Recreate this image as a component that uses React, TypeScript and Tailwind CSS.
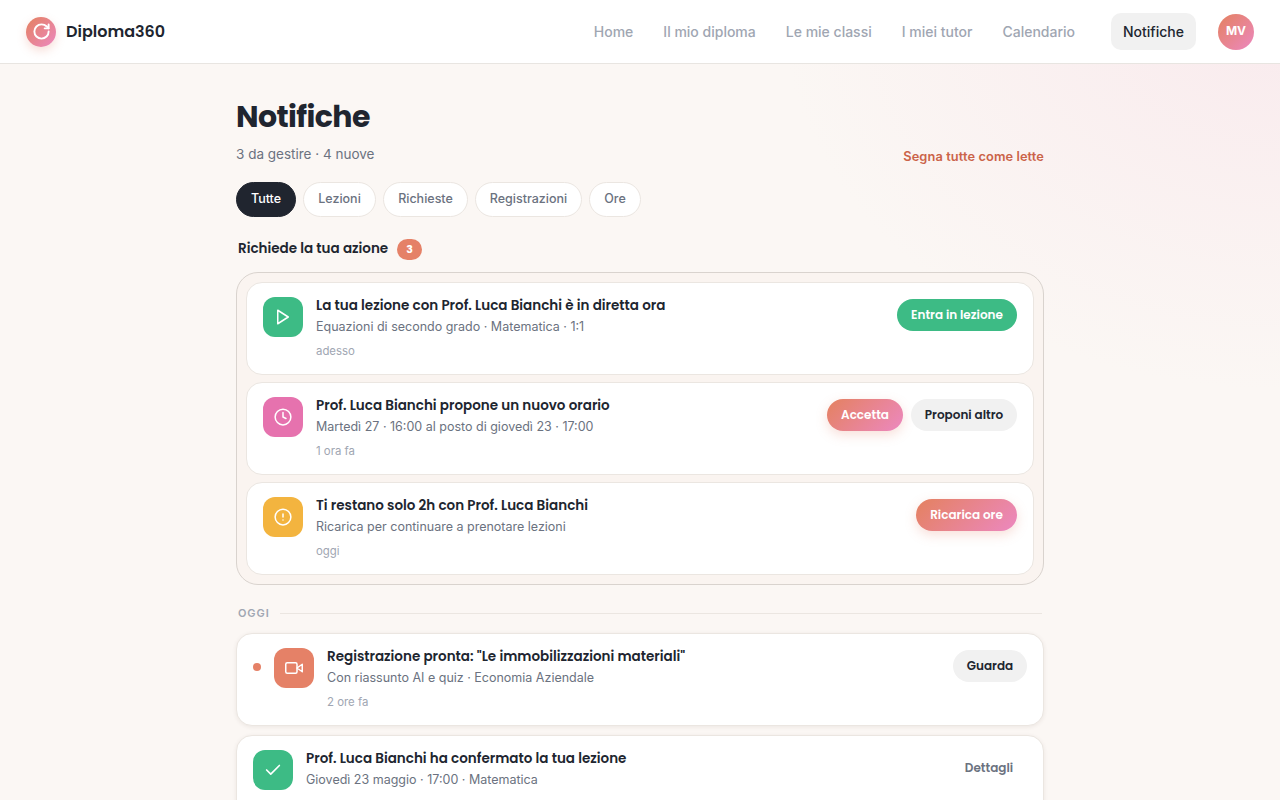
import type { ReactNode } from "react";

type Tone = "green" | "primary" | "soft" | "ghost";

interface Action {
  label: string;
  tone: Tone;
  className: string;
}

interface Item {
  title: string;
  text: string;
  time?: string;
  iconBg: string;
  icon: ReactNode;
  unread?: boolean;
  actions: Action[];
}

const tones: Record<Tone, string> = {
  green: "bg-[#3dbb85] text-white",
  primary:
    "bg-[linear-gradient(135deg,#e4815f,#ec88c0)] text-white shadow-[0_4px_12px_rgba(229,128,102,0.25)]",
  soft: "bg-[#f1f1f1] text-[#20252f]",
  ghost: "text-[#6b7280]",
};

const heading = "font-[Poppins,Inter,sans-serif]";

const Glyph = ({ children }: { children: ReactNode }) => (
  <svg
    width={18}
    height={18}
    viewBox="0 0 24 24"
    fill="none"
    stroke="currentColor"
    strokeWidth="2"
    strokeLinecap="round"
    strokeLinejoin="round"
    className="overflow-visible"
  >
    {children}
  </svg>
);

const navItems = ["Home", "Il mio diploma", "Le mie classi", "I miei tutor", "Calendario"];

const filters = [
  { label: "Tutte", className: "w-[60px] bg-[#20252f] border-[#20252f] text-white" },
  { label: "Lezioni", className: "w-[73px] bg-white border-[#ebe6e1] text-[#6b7280]" },
  { label: "Richieste", className: "w-[85px] bg-white border-[#ebe6e1] text-[#6b7280]" },
  { label: "Registrazioni", className: "w-[107px] bg-white border-[#ebe6e1] text-[#6b7280]" },
  { label: "Ore", className: "w-[52px] bg-white border-[#ebe6e1] text-[#6b7280]" },
];

const pending: Item[] = [
  {
    title: "La tua lezione con Prof. Luca Bianchi è in diretta ora",
    text: "Equazioni di secondo grado · Matematica · 1:1",
    time: "adesso",
    iconBg: "bg-[#3dbb85]",
    icon: <path d="M5 3l14 9-14 9z" />,
    actions: [{ label: "Entra in lezione", tone: "green", className: "w-[120px]" }],
  },
  {
    title: "Prof. Luca Bianchi propone un nuovo orario",
    text: "Martedì 27 · 16:00 al posto di giovedì 23 · 17:00",
    time: "1 ora fa",
    iconBg: "bg-[#e672ae]",
    icon: (
      <>
        <circle cx="12" cy="12" r="10.5" />
        <path d="M12 6v6l4 2" />
      </>
    ),
    actions: [
      { label: "Accetta", tone: "primary", className: "w-[76px]" },
      { label: "Proponi altro", tone: "soft", className: "w-[106px]" },
    ],
  },
  {
    title: "Ti restano solo 2h con Prof. Luca Bianchi",
    text: "Ricarica per continuare a prenotare lezioni",
    time: "oggi",
    iconBg: "bg-[#f3b43f]",
    icon: (
      <>
        <circle cx="12" cy="12" r="10.5" />
        <path d="M12 8v4M12 16h.01" />
      </>
    ),
    actions: [{ label: "Ricarica ore", tone: "primary", className: "w-[101px]" }],
  },
];

const today: Item[] = [
  {
    title: 'Registrazione pronta: "Le immobilizzazioni materiali"',
    text: "Con riassunto AI e quiz · Economia Aziendale",
    time: "2 ore fa",
    iconBg: "bg-[#e58167]",
    unread: true,
    icon: (
      <>
        <rect x="1" y="5" width="15" height="14" rx="2" />
        <path d="M23 7l-7 5 7 5z" />
      </>
    ),
    actions: [{ label: "Guarda", tone: "soft", className: "w-[74px]" }],
  },
  {
    title: "Prof. Luca Bianchi ha confermato la tua lezione",
    text: "Giovedì 23 maggio · 17:00 · Matematica",
    iconBg: "bg-[#3dbb85]",
    icon: <path d="M20.5 6L9 17.5l-5.5-5.5" strokeWidth="2.2" />,
    actions: [{ label: "Dettagli", tone: "ghost", className: "w-[76px]" }],
  },
];

const NotificationCard = ({ item, raised }: { item: Item; raised?: boolean }) => (
  <article
    className={`flex h-[93px] shrink-0 items-start rounded-[16px] border border-[#ebe6e1] bg-white px-4 pt-3.5 ${
      raised ? "shadow-[0_1px_4px_rgba(60,40,20,0.08)]" : ""
    }`}
  >
    {item.unread && <span className="mt-[15px] mr-[13px] size-2 shrink-0 rounded-full bg-[#e58167]" />}
    <div className={`flex size-10 shrink-0 items-center justify-center rounded-[12px] text-white ${item.iconBg}`}>
      <Glyph>{item.icon}</Glyph>
    </div>
    <div className="ml-[13px] min-w-0 flex-1">
      <h3 className={`${heading} text-[13.5px] leading-[17px] font-semibold whitespace-nowrap text-[#20252f]`}>
        {item.title}
      </h3>
      <p className="mt-1 text-[12.5px] leading-[18px] text-[#6b7280]">{item.text}</p>
      {item.time && <p className="mt-[7px] text-[11.4px] leading-4 text-[#a0a6b2]">{item.time}</p>}
    </div>
    <div className="mt-0.5 flex gap-2">
      {item.actions.map((action) => (
        <button
          key={action.label}
          className={`${heading} flex h-8 items-center justify-center rounded-full text-[12px] font-semibold whitespace-nowrap ${tones[action.tone]} ${action.className}`}
        >
          {action.label}
        </button>
      ))}
    </div>
  </article>
);

const App = () => {
  return (
    <div className="flex h-screen flex-col overflow-hidden bg-[#fbf7f4] bg-[radial-gradient(ellipse_500px_390px_at_100%_0%,#f9eaed,#fbf7f4)] font-[Inter,sans-serif] text-[#20252f]">
      {/* Top bar */}
      <header className="flex h-16 shrink-0 items-center border-b border-[#e8e5e1] bg-white px-[26px]">
        <div className="flex size-[30px] items-center justify-center rounded-full bg-[linear-gradient(135deg,#e4815f,#ec88c0)] text-white shadow-[0_4px_10px_rgba(229,128,102,0.25)]">
          <svg width="19" height="19" viewBox="0 0 24 24" fill="none" stroke="currentColor" strokeWidth="2.4" strokeLinecap="round" strokeLinejoin="round">
            <path d="M21 12a9 9 0 1 1-9-9c2.52 0 4.93 1 6.74 2.74L21 8" />
            <path d="M21 3v5h-5" />
          </svg>
        </div>
        <span className={`${heading} ml-2.5 text-[16px] font-semibold`}>Diploma360</span>
        <nav className="ml-auto flex items-center gap-[30px] text-[14px] font-medium text-[#a0a6b2]">
          {navItems.map((label) => (
            <a key={label} className="whitespace-nowrap">{label}</a>
          ))}
        </nav>
        <a className="ml-9 flex h-[37px] w-[85px] items-center justify-center rounded-[10px] bg-[#f1f1f1] text-[14px] font-medium">
          Notifiche
        </a>
        <div className="ml-[22px] flex size-9 items-center justify-center rounded-full bg-[linear-gradient(135deg,#e4815f,#ec88c0)] pb-0.5 text-[12px] font-bold text-white">
          MV
        </div>
      </header>

      <main className="mx-auto flex w-[808px] flex-1 flex-col overflow-visible">
        <div className="flex h-[118px] shrink-0 items-end justify-between pb-[17px]">
          <div className="pb-px">
            <h1 className={`${heading} text-[30px] leading-9 font-bold tracking-[-0.6px]`}>Notifiche</h1>
            <p className="mt-[9px] text-[13.5px] leading-5 text-[#6b7280]">3 da gestire · 4 nuove</p>
          </div>
          <button className="text-[12.8px] leading-4 font-semibold tracking-[0.1px] text-[#cb6349]">Segna tutte come lette</button>
        </div>

        {/* Filters */}
        <div className="flex shrink-0 gap-[7px]">
          {filters.map((filter) => (
            <button
              key={filter.label}
              className={`flex h-[35px] items-center justify-center rounded-full border pb-px text-[12.5px] font-medium ${filter.className}`}
            >
              {filter.label}
            </button>
          ))}
        </div>

        <div className="mt-[22px] flex h-[21px] shrink-0 items-center gap-[9px] pl-0.5">
          <h2 className={`${heading} pb-px text-[13.5px] leading-5 font-semibold`}>Richiede la tua azione</h2>
          <span className={`${heading} flex h-[21px] w-[25px] items-center justify-center rounded-full bg-[#e58167] text-[11px] font-bold text-white`}>
            3
          </span>
        </div>

        <section className="mt-3 flex h-[313px] shrink-0 flex-col gap-[7px] rounded-[22px] border border-[#d9d3ce] bg-[#faf4f0] p-[9px]">
          {pending.map((item) => (
            <NotificationCard key={item.title} item={item} />
          ))}
        </section>

        {/* Today */}
        <div className="mt-5 flex h-4 shrink-0 items-center gap-2.5 px-0.5">
          <h2 className="text-[11px] font-semibold tracking-[0.9px] text-[#a0a6b2]">OGGI</h2>
          <span className="h-px flex-1 bg-[#ebe6e1]" />
        </div>
        <section className="mt-3 flex shrink-0 flex-col gap-[9px]">
          {today.map((item) => (
            <NotificationCard key={item.title} item={item} raised />
          ))}
        </section>
      </main>
    </div>
  );
};

export default App;
